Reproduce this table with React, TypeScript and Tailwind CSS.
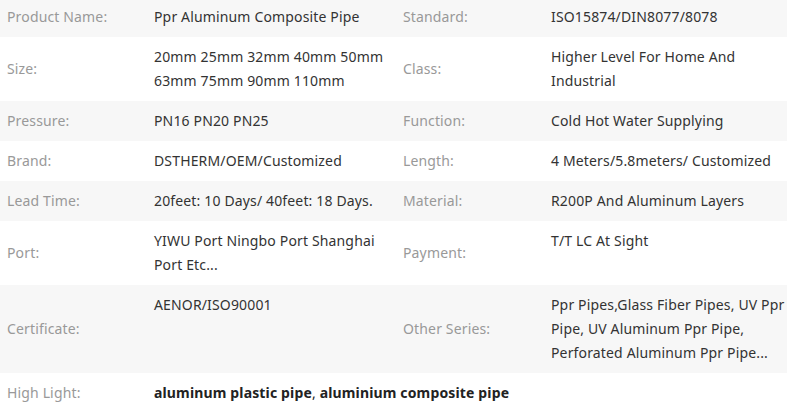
const rows: [string, string[], string, string[]][] = [
  ["Product Name:", ["Ppr Aluminum Composite Pipe"], "Standard:", ["ISO15874/DIN8077/8078"]],
  ["Size:", ["20mm 25mm 32mm 40mm 50mm 63mm 75mm 90mm 110mm"], "Class:", ["Higher Level For Home And Industrial"]],
  ["Pressure:", ["PN16 PN20 PN25"], "Function:", ["Cold Hot Water Supplying"]],
  ["Brand:", ["DSTHERM/OEM/Customized"], "Length:", ["4 Meters/5.8meters/ Customized"]],
  ["Lead Time:", ["20feet: 10 Days/ 40feet: 18 Days."], "Material:", ["R200P And Aluminum Layers"]],
  ["Port:", ["YIWU Port Ningbo Port Shanghai Port Etc..."], "Payment:", ["T/T LC At Sight"]],
  [
    "Certificate:",
    ["AENOR/ISO90001"],
    "Other Series:",
    ["Ppr Pipes,Glass Fiber Pipes, UV Ppr Pipe, UV Aluminum Ppr Pipe, Perforated Aluminum Ppr Pipe..."],
  ],
];

export default function App() {
  return (
    <div className="w-[805px] h-[408px] overflow-hidden bg-white">
      <div
        className="mt-[-3px] w-[787px] text-[14px] leading-6 tracking-[0.15px]"
        style={{ fontFamily: '"Noto Sans", "Open Sans", sans-serif' }}
      >
        {rows.map((r, i) => (
          <div
            key={r[0]}
            className={`grid grid-cols-[147px_249px_148px_243px] ${i % 2 === 0 ? "bg-[#f7f7f7]" : "bg-white"}`}
          >
            <div className="flex items-center px-[7px] py-2 text-[#999]">{r[0]}</div>
            <div className="self-start pl-[7px] pr-[2px] py-2 text-[#333]">{r[1].join(" ")}</div>
            <div className="flex items-center px-[7px] py-2 text-[#999]">{r[2]}</div>
            <div className="self-start pl-[7px] pr-[2px] py-2 text-[#333]">{r[3].join(" ")}</div>
          </div>
        ))}
        {/* high light */}
        <div className="grid grid-cols-[147px_640px]">
          <div className="px-[7px] py-2 text-[#999]">High Light:</div>
          <div className="px-[7px] py-2 text-[#222]">
            <span className="font-bold">aluminum plastic pipe</span>,{" "}
            <span className="font-bold">aluminium composite pipe</span>
          </div>
        </div>
      </div>
    </div>
  );
}
